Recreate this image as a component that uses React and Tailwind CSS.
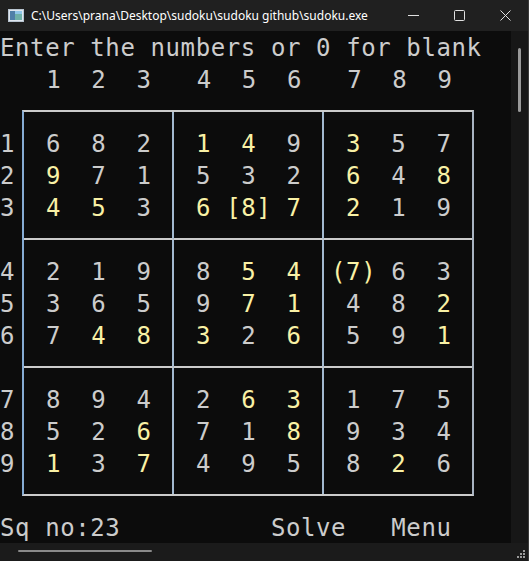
import React from 'react'

const boxes = [
  [[' 6  8  2', ' g  g  g'], [' 9  7  1', ' y  g  g'], [' 4  5  3', ' y  y  g']],
  [[' 1  4  9', ' y  y  g'], [' 5  3  2', ' g  g  g'], [' 6 [8] 7', ' y yyy y']],
  [[' 3  5  7', ' y  g  g'], [' 6  4  8', ' y  g  y'], [' 2  1  9', ' y  g  g']],
  [[' 2  1  9', ' g  g  g'], [' 3  6  5', ' g  g  g'], [' 7  4  8', ' g  y  y']],
  [[' 8  5  4', ' g  y  y'], [' 9  7  1', ' g  y  y'], [' 3  2  6', ' y  g  y']],
  [['(7) 6  3', 'yyy g  g'], [' 4  8  2', ' g  g  y'], [' 5  9  1', ' g  g  y']],
  [[' 8  9  4', ' g  g  g'], [' 5  2  6', ' g  g  y'], [' 1  3  7', ' y  g  y']],
  [[' 2  6  3', ' g  y  y'], [' 7  1  8', ' g  g  y'], [' 4  9  5', ' g  g  g']],
  [[' 1  7  5', ' g  g  g'], [' 9  3  4', ' g  g  g'], [' 8  2  6', ' g  y  g']],
]

function Line({ text, mask }) {
  return (
    <div className="h-[32px] pt-[1px] pl-[1px] whitespace-pre">
      {text.split('').map((c, i) => (
        <span key={i} className={mask[i] === 'y' ? 'text-[#f9f1a5]' : 'text-[#cccccc]'}>
          {c}
        </span>
      ))}
    </div>
  )
}

function TitleIcon() {
  return (
    <svg width="16" height="13" viewBox="0 0 16 13">
      <rect x="0.5" y="0.5" width="15" height="12" fill="#dfe6ee" stroke="#b8c4d0" />
      <rect x="2" y="2" width="5" height="9" fill="#4f7fa8" />
      <rect x="7" y="2" width="7" height="9" fill="#6fb0a8" />
      <rect x="7" y="2" width="7" height="3" fill="#8fc6e8" />
    </svg>
  )
}

export default function App() {
  return (
    <div className="w-[529px] h-[561px] flex flex-col bg-[#1c1c1c] overflow-hidden border-r border-[#3a3a3a]">
      {/* title bar */}
      <div className="h-[31px] flex items-center bg-[#202020] text-white text-[12px] font-['Noto_Sans',sans-serif]">
        <div className="pl-[8px] pr-[7px] flex items-center">
          <TitleIcon />
        </div>
        <span className="flex-1">C:\Users\prana\Desktop\sudoku\sudoku github\sudoku.exe</span>
        <div className="flex items-center">
          <div className="w-[46px] flex justify-center">
            <svg width="11" height="11" viewBox="0 0 11 11">
              <line x1="0" y1="5.5" x2="11" y2="5.5" stroke="#e0e0e0" strokeWidth="1" />
            </svg>
          </div>
          <div className="w-[46px] flex justify-center">
            <svg width="11" height="11" viewBox="0 0 11 11">
              <rect x="0.5" y="0.5" width="10" height="10" rx="1" fill="none" stroke="#e0e0e0" strokeWidth="1" />
            </svg>
          </div>
          <div className="w-[46px] flex justify-center">
            <svg width="11" height="11" viewBox="0 0 11 11">
              <path d="M0.5 0.5 L10.5 10.5 M10.5 0.5 L0.5 10.5" stroke="#e0e0e0" strokeWidth="1" />
            </svg>
          </div>
        </div>
      </div>

      {/* console body */}
      <div className="flex h-[512px]">
        <div className="w-[511px] bg-[#0c0c0c] text-[#cccccc] font-['DejaVu_Sans_Mono',monospace] text-[24px] leading-[32px] tracking-[0.6px]">
          <div className="h-[32px] pt-[1px] whitespace-pre">Enter the numbers or 0 for blank</div>
          <div className="h-[32px] pt-[1px] pl-[1px] whitespace-pre">{'   1  2  3   4  5  6   7  8  9'}</div>

          <div className="flex mt-[15px]">
            <div className="w-[22px] flex flex-col">
              {[['1', '2', '3'], ['4', '5', '6'], ['7', '8', '9']].map((g, i) => (
                <div key={i} className="h-[128px] pt-[18px]">
                  {g.map((n) => (
                    <div key={n} className="h-[32px]">{n}</div>
                  ))}
                </div>
              ))}
            </div>

            <div className="w-[452px] grid grid-cols-[150px_150px_148px] border-y-2 border-y-[#cccccc] border-l-2 border-l-[#86acd4] border-r-2 border-r-[#a9b4c2]">
              {boxes.map((rows, i) => (
                <div
                  key={i}
                  className={
                    'pl-[6px] py-[15px] ' +
                    (i % 3 !== 2 ? 'border-r-2 border-r-[#a3b9cf] ' : '') +
                    (i < 6 ? 'border-b-2 border-b-[#cccccc]' : '')
                  }
                >
                  {rows.map(([t, m], j) => (
                    <Line key={j} text={t} mask={m} />
                  ))}
                </div>
              ))}
            </div>
          </div>

          <div className="mt-[15px] h-[32px] pt-[1px] whitespace-pre">{'Sq no:23          Solve   Menu'}</div>
        </div>

        {/* vertical scrollbar */}
        <div className="flex-1 bg-[#171717] flex justify-center pt-[17px]">
          <div className="w-[3px] h-[64px] bg-[#9a9a9a] rounded-full" />
        </div>
      </div>

      {/* horizontal scrollbar */}
      <div className="h-[18px] bg-[#1b1b1b] flex">
        <div className="flex-1 pt-[7px] pl-[18px]">
          <div className="w-[134px] h-[2px] bg-[#8a8a8a] rounded-full" />
        </div>
        <div className="w-[18px] flex items-end justify-end p-[3px]">
          <svg width="8" height="8" viewBox="0 0 8 8" fill="#9a9a9a">
            <rect x="6" y="0" width="2" height="2" />
            <rect x="3" y="3" width="2" height="2" />
            <rect x="6" y="3" width="2" height="2" />
            <rect x="0" y="6" width="2" height="2" />
            <rect x="3" y="6" width="2" height="2" />
            <rect x="6" y="6" width="2" height="2" />
          </svg>
        </div>
      </div>
    </div>
  )
}
